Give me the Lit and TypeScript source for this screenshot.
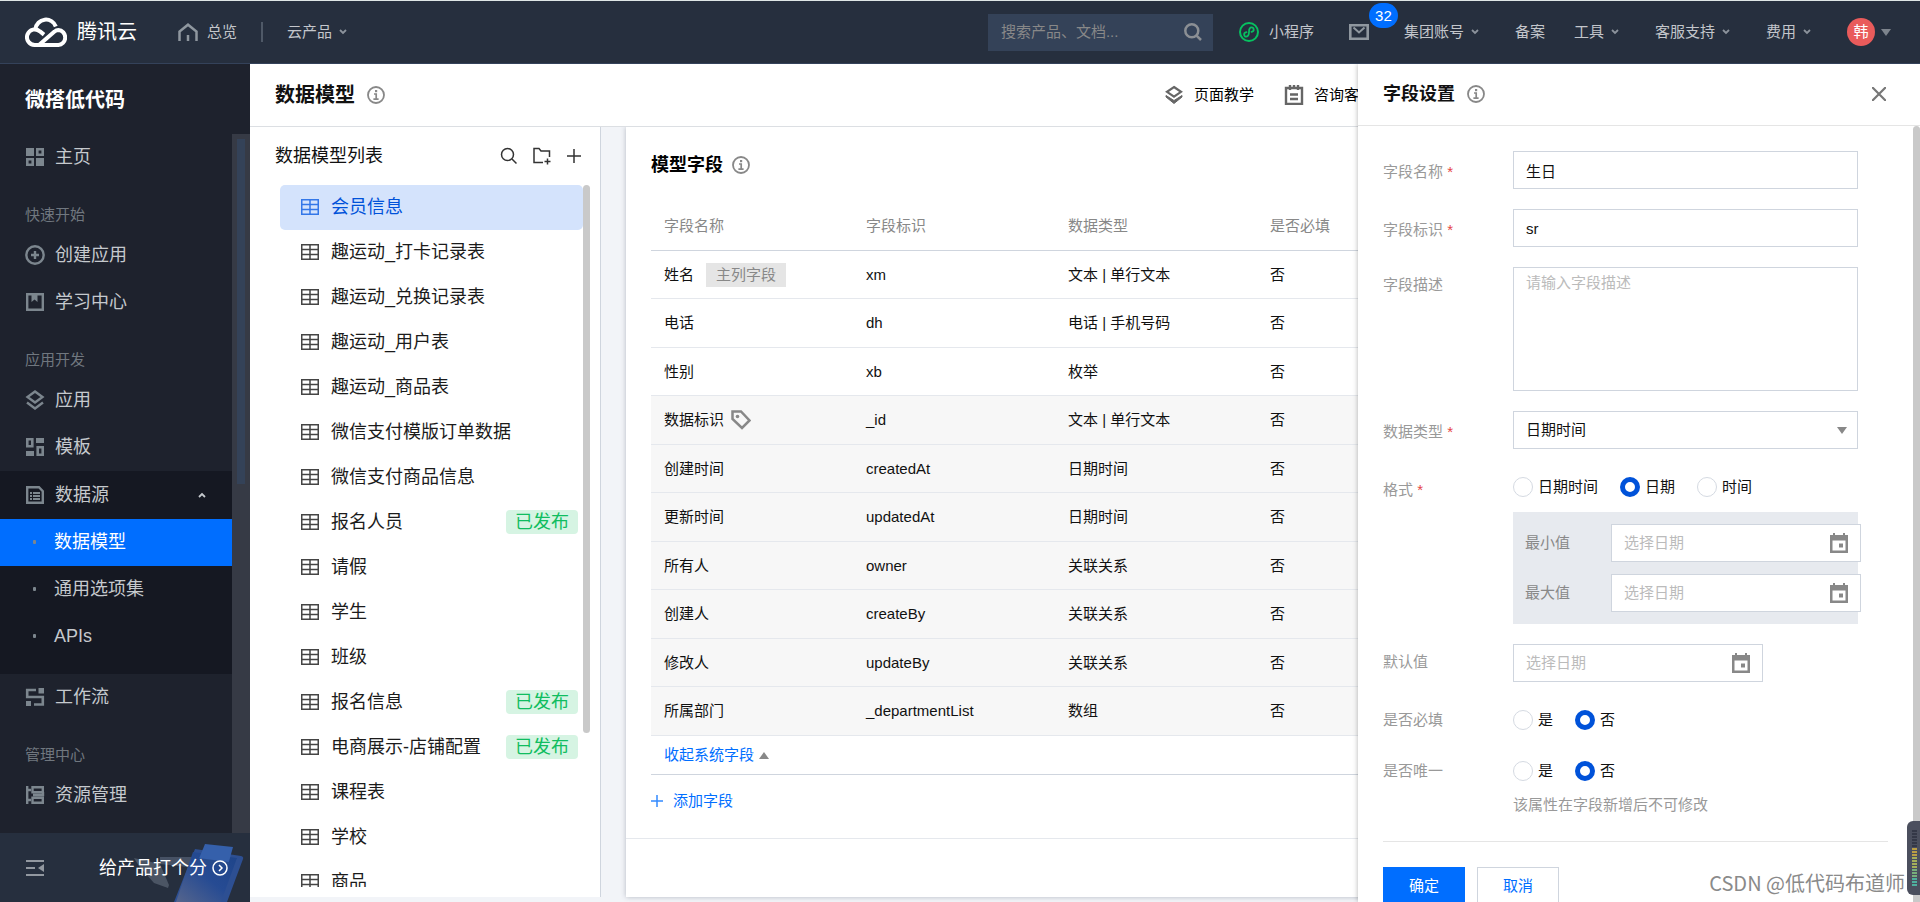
import { LitElement, html, svg, css } from "lit";
import { customElement, state } from "lit/decorators.js";
import { classMap } from "lit/directives/class-map.js";

const base = css`
  * { box-sizing: border-box; }
  :host { font-family: "Liberation Sans", "Noto Sans CJK SC", sans-serif; font-size: 15px; line-height: 24px; color: #111; }
  a { color: inherit; text-decoration: none; }
  button { font: inherit; color: inherit; background: none; border: 0; padding: 0; margin: 0; cursor: pointer; display: flex; align-items: center; }
  input, textarea, select { font: inherit; color: inherit; margin: 0; border-radius: 0; outline: none; }
  h1, h2, p, ul { margin: 0; padding: 0; font-weight: inherit; font-size: inherit; }
  ul { list-style: none; }
  svg { display: block; flex: none; }
`;

const infoIcon = html`<svg width="18" height="18" viewBox="0 0 18 18" fill="none" stroke="#888" stroke-width="2">
  <circle cx="9" cy="9" r="8" stroke-width="1.8"></circle><path d="M7 8h2.2v5M6.4 13.200h5.200" stroke-width="1.700"></path><path d="M8 4h2.200v2.200H8z" fill="#888" stroke="none"></path></svg>`;
const chevron = html`<svg width="10" height="8" viewBox="0 0 10 8" fill="none" stroke="#8c939c" stroke-width="1.8"><path d="M2 2l3 3 3-3"></path></svg>`;
const gridIcon = html`<svg width="18" height="16" viewBox="0 0 18 16" fill="none" stroke="currentColor" stroke-width="1.5"><path d="M.75.75h16.500v14.500H.75zM.75 5.500h16.500M.75 10.500h16.500M9 .75v14.500"></path></svg>`;
const calendarIcon = html`<svg class="cal" width="18" height="20" viewBox="0 0 18 20" fill="#888"><path d="M3 0h2v2h8V0h2v2h3v18H0V2h3zM2.500 7.500v10h13v-10z" fill-rule="evenodd"></path><path d="M9 10.500h4v4H9z"></path></svg>`;

@customElement("top-nav")
class TopNav extends LitElement {
  static styles = [base, css`
    :host { display: block; }
    .bar { display: flex; align-items: center; height: 64px; padding: 0 29px 0 25px; background: #262f3e; border-top: 1px solid #dfe6e6; border-bottom: 1px solid #34425a; color: #c3c6cb; }
    .logo { display: flex; align-items: center; gap: 10px; color: #fff; font-size: 20px; }
    .home { display: flex; align-items: center; gap: 9px; margin-left: 41px; }
    .rule { width: 2px; height: 20px; margin: 0 24px; background: #4f5967; }
    .menu { display: flex; align-items: center; gap: 6px; }
    .search { display: flex; align-items: center; width: 225px; height: 37px; margin-left: auto; padding: 0 11px 0 13px; background: #344258; }
    .search input { flex: 1; min-width: 0; border: 0; padding: 0; background: none; color: #fff; }
    .search input::placeholder { color: #888; opacity: 1; }
    .right { display: flex; align-items: center; gap: 35px; margin-left: 26px; }
    .mini { display: flex; align-items: center; gap: 10px; }
    .pair { display: flex; gap: 29px; }
    .mail { position: relative; }
    .badge { position: absolute; left: 20px; top: -21px; width: 29px; height: 25px; border-radius: 13px; background: #006eff; color: #fff; line-height: 25px; text-align: center; }
    .avatar { display: flex; align-items: center; gap: 6px; }
    .face { width: 28px; height: 28px; border-radius: 50%; background: #e95b5b; color: #fff; line-height: 28px; text-align: center; }
  `];
  menu(t: string) { return html`<button class="menu">${t}${chevron}</button>`; }
  render() {
    return html`<header class="bar">
      <a class="logo" href="#"><svg width="42" height="30" viewBox="0 0 42 30" fill="none" stroke="#fff" stroke-width="4" stroke-linejoin="round">
        <path d="M14 28L29.5 14.6C31 13.2 32.4 13 33.4 13A7 7.500 0 0 1 33 28H10A7.800 7.800 0 1 1 15 14.400L19 17.600"></path><path d="M10.500 12A10.500 10.500 0 0 1 30.800 9.500"></path></svg>腾讯云</a>
      <a class="home" href="#"><svg width="20" height="19" viewBox="0 0 20 19" fill="none" stroke="#8f979f" stroke-width="2.500"><path d="M1.500 18V8.500L10 1.700l8.500 6.800V18"></path><path d="M10 12v6"></path></svg>总览</a>
      <span class="rule"></span>
      ${this.menu("云产品")}
      <label class="search"><input aria-label="搜索" placeholder="搜索产品、文档..." /><svg width="18" height="18" viewBox="0 0 18 18" fill="none" stroke="#8b8f94" stroke-width="2.500"><circle cx="7.800" cy="7.800" r="6.500"></circle><path d="M12.300 12.300L17 17"></path></svg></label>
      <nav class="right">
        <a class="mini" href="#"><svg width="20" height="20" viewBox="0 0 20 20" fill="none" stroke="#07c160" stroke-width="2" stroke-linecap="round"><circle cx="10" cy="10" r="9"></circle><path d="M7.500 10.200C3.800 11 5 15 7.400 14.600S10 12.500 10 10s.4-4.600 2.600-4.600S16 9 12.500 9.800" stroke-width="1.800"></path></svg>小程序</a>
        <a class="mail" href="#" aria-label="消息"><svg width="20" height="16" viewBox="0 0 20 16" fill="none" stroke="#8f979f" stroke-width="2.600"><path d="M1.300 1.300h17.400v13.400H1.300z"></path><path d="M4.500 3.500L10 8.500l5.500-5" stroke-width="2"></path></svg><span class="badge">32</span></a>
        ${this.menu("集团账号")}
        <div class="pair"><a href="#">备案</a>${this.menu("工具")}</div>
        ${this.menu("客服支持")}${this.menu("费用")}
        <button class="avatar"><span class="face">韩</span><svg width="10" height="7" viewBox="0 0 10 7" fill="#7d848d"><path d="M0 0h10L5 7z"></path></svg></button>
      </nav>
    </header>`;
  }
}

const navIcons: Record<string, unknown> = {
  home: svg`<path d="M0 0h8v8H0zM10 10h8v8h-8z" fill="currentColor" stroke="none"></path><path d="M11.300 1.300h5.400v5.400h-5.400zM1.300 11.300h5.400v5.400H1.300z" stroke-width="2.600"></path>`,
  plus: svg`<circle cx="9" cy="9" r="8.700" stroke-width="2.400"></circle><path d="M9 5v8M5 9h8"></path>`,
  book: svg`<path d="M1.200 1.200h15.600v15.600H1.200z"></path><path d="M5.500 2v7l3-2.500 3 2.500V2z" fill="currentColor" stroke="none"></path>`,
  layers: svg`<path d="M9 .5l7.500 5.500L9 11.500 1.500 6zM1 11.500l8 6 8-6"></path>`,
  template: svg`<path d="M1.300 1.300h5v7h-5zM11.700 9.200h5v7.500h-5z" stroke-width="2.600"></path><path d="M10 0h8v5h-8zM0 13h8v5H0z" fill="currentColor" stroke="none"></path>`,
  data: svg`<path d="M1.200 1.200h11.800l3.800 4v11.600H1.200z"></path><path d="M4 7h2m1 0h7M4 10h2m1 0h7M4 13h2m1 0h7" stroke-width="1.800"></path>`,
  flow: svg`<path d="M12.500 0h5.500v5.500h-5.500zM0 13h5v5H0z" fill="currentColor" stroke="none"></path><path d="M10 2H1.200v7h15.600v7.500H8" stroke-width="2.600"></path>`,
  resource: svg`<path d="M1.200 0v18M1 4h4M1 14h4M6.500 1.200h10.300v5H6.500zM6.500 11.800h10.300v5H6.500zM7 9h10V6"></path>`,
  line: svg`<path d="M-1 1h20M1 1v16h16V1" stroke-width="2"></path>`,
};

@customElement("side-nav")
class SideNav extends LitElement {
  static styles = [base, css`
    :host { display: flex; flex-direction: column; width: 250px; flex: none; background: #1e222d; color: #c5c9cd; font-size: 18px; }
    .title { padding: 24px 25px 22px; color: #fff; font-size: 20px; font-weight: bold; }
    .scroll { flex: 1; min-height: 0; display: flex; overflow: hidden; }
    .items { flex: 1; }
    .track { width: 18px; padding: 5px; background: #363a45; }
    .thumb { height: 50%; width: 8px; background: #344258; }
    .item { display: flex; align-items: center; gap: 11px; height: 47px; padding: 0 25px 1px 26px; }
    .item svg { color: #7c868e; }
    .label { padding: 22px 25px 5px; font-size: 15px; color: #70777f; }
    .open { background: #151822; padding-bottom: 14px; }
    .open .item:first-child { height: 48px; width: 100%; }
    .open .caret { margin-left: auto; color: #c5c9cd; }
    .child::before { content: ""; width: 3px; height: 4px; margin: 0 7px; border-radius: 1px; background: #7c868e; }
    .active { background: #006eff; color: #fff; }
    .foot { display: flex; align-items: center; height: 69px; padding: 0 22px 0 26px; background: #262f3e; color: #fff; position: relative; }
    .rate { margin-left: auto; gap: 5px; position: relative; }
    .art { position: absolute; right: 4px; bottom: 0; }
  `];
  item(icon: string, text: string) {
    return html`<a class="item" href="#"><svg width="18" height="18" viewBox="0 0 18 18" overflow="visible" fill="none" stroke="currentColor" stroke-width="2.400">${navIcons[icon]}</svg>${text}</a>`;
  }
  render() {
    return html`<div class="title">微搭低代码</div>
      <div class="scroll"><nav class="items">
        ${this.item("home", "主页")}
        <p class="label">快速开始</p>${this.item("plus", "创建应用")}${this.item("book", "学习中心")}
        <p class="label">应用开发</p>${this.item("layers", "应用")}${this.item("template", "模板")}
        <div class="open">
          <button class="item" aria-expanded="true"><svg width="18" height="18" viewBox="0 0 18 18" fill="none" stroke="currentColor" stroke-width="2.400">${navIcons.data}</svg>数据源<svg class="caret" width="10" height="8" viewBox="0 0 10 8" fill="none" stroke="currentColor" stroke-width="1.800"><path d="M2 6l3-3 3 3"></path></svg></button>
          ${["数据模型", "通用选项集", "APIs"].map((t, i) => html`<a href="#" class=${classMap({ item: true, child: true, active: i === 0 })}>${t}</a>`)}
        </div>
        ${this.item("flow", "工作流")}
        <p class="label">管理中心</p>${this.item("resource", "资源管理")}${this.item("line", "")}
      </nav><div class="track"><div class="thumb"></div></div></div>
      <div class="foot">
        <svg class="art" width="116" height="58" viewBox="0 0 116 58">
          <defs><linearGradient id="g" x1="0" y1="1" x2="1" y2="0"><stop offset="0" stop-color="#56658c"></stop><stop offset=".5" stop-color="#264b93"></stop><stop offset="1" stop-color="#1e4489"></stop></linearGradient></defs>
          <path d="M30 13h34l-6 10-28-3z" fill="#465164"></path><path d="M4 14l26 6 9 21-1 3-14-5L9 22z" fill="#4b5564"></path>
          <path d="M65 5l46 7q3 1 2 3L97 58H44z" fill="#2d4f92"></path><path d="M63 8l44 6-16 44H46z" fill="url(#g)"></path>
          <path d="M75 0l28 3-5 18-30-4z" fill="#3560ab"></path><path d="M68 14l31 4-2 5-30-4z" fill="#274b8c"></path>
        </svg>
        <svg width="18" height="18" viewBox="0 0 18 18" fill="none" stroke="#9298a0" stroke-width="2.200"><path d="M0 2h18M0 9h9M0 16h18"></path><path d="M18 5v8l-6-4z" fill="#9298a0" stroke="none"></path></svg>
        <button class="rate">给产品打个分<svg width="16" height="16" viewBox="0 0 16 16" fill="none" stroke="#fff" stroke-width="1.500"><circle cx="8" cy="8" r="7"></circle><path d="M7 5l3 3-3 3"></path></svg></button>
      </div>`;
  }
}

@customElement("model-list")
class ModelList extends LitElement {
  @state() selected = 0;
  models = ["会员信息", "趣运动_打卡记录表", "趣运动_兑换记录表", "趣运动_用户表", "趣运动_商品表", "微信支付模版订单数据", "微信支付商品信息", "报名人员", "请假", "学生", "班级", "报名信息", "电商展示-店铺配置", "课程表", "学校", "商品"];
  published = [7, 11, 12];
  static styles = [base, css`
    :host { display: flex; flex-direction: column; width: 351px; flex: none; padding-bottom: 10px; background: #fff; border-right: 1px solid #cfd5de; font-size: 18px; }
    .head { display: flex; align-items: center; height: 58px; padding: 0 18px 0 25px; }
    .tools { display: flex; gap: 15px; margin-left: auto; }
    .body { flex: 1; min-height: 0; display: flex; padding: 0 10px 0 30px; overflow: hidden; }
    .rows { flex: 1; }
    .row { display: flex; gap: 12px; width: 100%; height: 45px; padding: 0 5px 1px 21px; border-radius: 5px; color: #1b1b1b; }
    .row svg { color: #444; }
    .on { background: #d4e3fc; color: #0052d9; }
    .on svg { color: #3377e8; }
    .tag { margin-left: auto; padding: 0 9px; border-radius: 4px; background: #d6f4e3; color: #10bd60; }
    .thumb { width: 7px; height: 78%; border-radius: 4px; background: #c9c9c9; }
  `];
  render() {
    return html`<div class="head"><h2>数据模型列表</h2><div class="tools">
        <button aria-label="搜索"><svg width="18" height="18" viewBox="0 0 18 18" fill="none" stroke="#333" stroke-width="1.500"><circle cx="7.500" cy="7.500" r="6"></circle><path d="M12 12l4.500 4.500"></path></svg></button>
        <button aria-label="新建文件夹"><svg width="18" height="18" viewBox="0 0 18 18" fill="none" stroke="#333" stroke-width="1.500"><path d="M10 15.500H1V1.500h5l2 2.500h8.500v6M11.500 14.500h6M14.500 11.500v6"></path></svg></button>
        <button aria-label="新建"><svg width="16" height="18" viewBox="0 0 16 18" fill="none" stroke="#333" stroke-width="1.500"><path d="M1 9h14M8 2v14"></path></svg></button>
      </div></div>
      <div class="body"><ul class="rows">${this.models.map((m, i) => html`<li><button class=${classMap({ row: true, on: i === this.selected })} @click=${() => (this.selected = i)}>${gridIcon}<span>${m}</span>${this.published.includes(i) ? html`<span class="tag">已发布</span>` : ""}</button></li>`)}</ul><div class="thumb"></div></div>`;
  }
}

@customElement("field-table")
class FieldTable extends LitElement {
  rows = [["姓名", "xm", "文本 | 单行文本"], ["电话", "dh", "电话 | 手机号码"], ["性别", "xb", "枚举"], ["数据标识", "_id", "文本 | 单行文本"], ["创建时间", "createdAt", "日期时间"], ["更新时间", "updatedAt", "日期时间"], ["所有人", "owner", "关联关系"], ["创建人", "createBy", "关联关系"], ["修改人", "updateBy", "关联关系"], ["所属部门", "_departmentList", "数组"]];
  static styles = [base, css`
    :host { display: block; flex: 1; min-width: 0; margin: 0 0 5px 25px; background: #fff; box-shadow: 0 0 5px rgba(40, 50, 70, 0.3); }
    .card { padding: 24px 25px; border-bottom: 1px solid #e5e8ed; }
    .title { display: flex; align-items: center; gap: 9px; height: 28px; font-size: 18px; font-weight: bold; color: #000; }
    table { width: 100%; margin-top: 22px; table-layout: fixed; border-collapse: separate; border-spacing: 0; }
    .col { width: 202px; }
    th, td { padding: 0 12px 0 13px; text-align: left; vertical-align: middle; border-bottom: 1px solid #e5e8ed; font-weight: normal; }
    th { height: 50px; color: #888; border-color: #cfd5de; }
    td { height: 48px; }
    tbody tr:nth-child(even) td { height: 49px; }
    .system td { background: #f7f7f7; }
    .name { display: flex; align-items: center; }
    .tag { margin-left: 12px; padding: 0 10px; background: #e5e5e5; color: #888; }
    .name svg { margin-left: 7px; }
    .fold { gap: 5px; height: 39px; width: 100%; padding: 0 12px 0 13px; color: #006eff; border-bottom: 1px solid #cfd5de; }
    .add { gap: 10px; margin-top: 14px; padding-bottom: 1px; color: #006eff; }
  `];
  render() {
    return html`<section class="card"><h2 class="title">模型字段 ${infoIcon}</h2>
      <table><colgroup><col class="col" /><col class="col" /><col class="col" /><col /></colgroup>
        <thead><tr><th>字段名称</th><th>字段标识</th><th>数据类型</th><th>是否必填</th></tr></thead>
        <tbody>${this.rows.map((r, i) => html`<tr class=${classMap({ system: i > 2 })}><td><div class="name">${r[0]}${i === 0 ? html`<span class="tag">主列字段</span>` : ""}${i === 3 ? html`<svg width="20" height="20" viewBox="0 0 20 20" fill="none" stroke="#888" stroke-width="2.500"><path d="M1.500 1.500h8.500l8.500 9-7.500 7.500-9.500-9z"></path><circle cx="6.500" cy="6.500" r="1.800" fill="#888" stroke="none"></circle></svg>` : ""}</div></td><td>${r[1]}</td><td>${r[2]}</td><td>否</td></tr>`)}</tbody></table>
      <button class="fold">收起系统字段<svg width="10" height="7" viewBox="0 0 10 7" fill="#888"><path d="M0 7h10L5 0z"></path></svg></button>
      <button class="add"><svg width="12" height="12" viewBox="0 0 12 12" stroke="#338bff" stroke-width="1.500"><path d="M0 6h12M6 0v12"></path></svg>添加字段</button>
    </section>`;
  }
}

@customElement("field-drawer")
class FieldDrawer extends LitElement {
  static styles = [base, css`
    :host { display: flex; flex-direction: column; background: #fff; box-shadow: 0 0 5px rgba(0, 0, 0, 0.3); }
    .head { display: flex; align-items: center; gap: 12px; height: 62px; flex: none; padding: 0 34px 2px 25px; border-bottom: 1px solid #e5e5e5; font-size: 18px; }
    .head h2 { font-weight: bold; }
    .close { margin-left: auto; }
    .wrap { flex: 1; min-height: 0; display: flex; overflow: hidden; }
    .body { flex: 1; padding: 25px 25px 0; }
    .thumb { width: 7px; height: 100%; border-radius: 4px 4px 0 0; background: #c9c9c9; }
    .form { display: grid; grid-template-columns: 130px minmax(0, 345px); row-gap: 20px; color: #111; }
    .label { padding-top: 6px; color: #999; }
    .req { padding-top: 9px; }
    .req::after { content: " *"; color: #e54545; }
    .box { display: block; width: 100%; height: 38px; padding: 0 12px; background: #fff; border: 1px solid #cfd5de; }
    textarea.box { height: 124px; padding-top: 3px; resize: none; }
    ::placeholder { color: #bbb; opacity: 1; }
    .pick { position: relative; }
    .pick select { appearance: none; }
    .arrow { position: absolute; right: 11px; top: 16px; pointer-events: none; }
    .date { display: flex; align-items: center; width: 250px; }
    .date input { flex: 1; min-width: 0; padding: 0; border: 0; background: none; }
    .radios { display: flex; gap: 22px; height: 31px; padding-top: 5px; }
    .radio { display: flex; align-items: center; gap: 5px; }
    .radio input { appearance: none; width: 20px; height: 20px; border: 1px solid #d5dae2; border-radius: 50%; background: #fff; }
    .radio input:checked { border: 5px solid #0052d9; }
    .range { display: grid; grid-template-columns: 86px 250px; gap: 12px 0; align-items: center; margin-top: 12px; padding: 12px; background: #e7eaef; color: #888; }
    .hint { margin-top: 9px; color: #999; }
    .actions { display: flex; gap: 12px; margin-top: 24px; padding-top: 25px; border-top: 1px solid #e5e5e5; }
    .btn { width: 82px; height: 38px; justify-content: center; border: 1px solid #cfd5de; color: #006eff; }
    .primary { background: #006eff; border-color: #006eff; color: #fff; }
  `];
  date(id: string) { return html`<div class="box date"><input id=${id} placeholder="选择日期" />${calendarIcon}</div>`; }
  radios(name: string, list: string[]) {
    return html`<div class="radios" role="radiogroup" aria-labelledby=${name}>${list.map((t, i) => html`<label class="radio"><input type="radio" name=${name} .checked=${i === 1} />${t}</label>`)}</div>`;
  }
  render() {
    return html`<div class="head"><h2>字段设置</h2>${infoIcon}<button class="close" aria-label="关闭"><svg width="14" height="14" viewBox="0 0 14 14" stroke="#777" stroke-width="2.200"><path d="M0 0l14 14M14 0L0 14"></path></svg></button></div>
      <div class="wrap"><form class="body"><div class="form">
        <label class="label req" for="name">字段名称</label><input class="box" id="name" .value=${"生日"} />
        <label class="label req" for="key">字段标识</label><input class="box" id="key" .value=${"sr"} />
        <label class="label" for="desc">字段描述</label><textarea class="box" id="desc" placeholder="请输入字段描述"></textarea>
        <label class="label req" for="type">数据类型</label><div class="pick"><select class="box" id="type"><option>日期时间</option></select><svg class="arrow" width="10" height="7" viewBox="0 0 10 7" fill="#888"><path d="M0 0h10L5 7z"></path></svg></div>
        <span class="label req" id="format">格式</span><div>${this.radios("format", ["日期时间", "日期", "时间"])}
          <div class="range"><label for="min">最小值</label>${this.date("min")}<label for="max">最大值</label>${this.date("max")}</div></div>
        <label class="label" for="default">默认值</label>${this.date("default")}
        <span class="label" id="required">是否必填</span>${this.radios("required", ["是", "否"])}
        <span class="label" id="unique">是否唯一</span><div>${this.radios("unique", ["是", "否"])}<p class="hint">该属性在字段新增后不可修改</p></div>
      </div>
      <div class="actions"><button type="button" class="btn primary">确定</button><button type="button" class="btn">取消</button></div></form><div class="thumb"></div></div>`;
  }
}

@customElement("app-root")
class AppRoot extends LitElement {
  static styles = [base, css`
    :host { display: flex; flex-direction: column; height: 100vh; overflow: hidden; background: #f2f4f8; position: relative; }
    .shell { flex: 1; min-height: 0; display: flex; position: relative; overflow: hidden; }
    .main { flex: 1; min-width: 0; display: flex; flex-direction: column; }
    .head { display: flex; align-items: center; gap: 12px; height: 63px; padding: 0 546px 0 25px; background: #fff; border-bottom: 1px solid #dcdfe3; position: relative; }
    .head h1 { font-size: 20px; font-weight: bold; }
    .links { display: flex; gap: 30px; margin-left: auto; color: #000; }
    .links a { display: flex; align-items: center; gap: 10px; }
    .cols { flex: 1; min-height: 0; display: flex; overflow: hidden; }
    model-list { margin-bottom: 5px; }
    .drawer { position: absolute; top: 0; right: 0; bottom: 0; width: 562px; }
    .mark { position: absolute; right: 15px; bottom: 5px; font-family: "Noto Sans CJK SC", sans-serif; font-size: 20px; line-height: 28px; color: #8a8a8a; }
    .meter { position: absolute; right: 0; bottom: 7px; width: 13px; height: 74px; padding: 9px 3px 9px 5px; border-radius: 6px 0 0 6px; background: #4b4f5e; }
    .meter svg { width: 100%; height: 100%; }
  `];
  render() {
    const bars = Array.from({ length: 19 }, (_, i) => svg`<path d=${`M0 ${i * 3 + 1}h5`} stroke=${i < 6 ? "#2d3140" : i < 9 ? "#e0b93c" : i < 13 ? "#c3cf5a" : i < 16 ? "#86cf86" : "#4fd0b5"} stroke-width="1.500"></path>`);
    return html`<top-nav></top-nav>
      <div class="shell"><side-nav></side-nav>
        <main class="main">
          <div class="head"><h1>数据模型</h1>${infoIcon}
            <nav class="links">
              <a href="#"><svg width="20" height="20" viewBox="0 0 20 20" fill="none" stroke="#666" stroke-width="2.200"><path d="M10 2l7 4.800-7 4.800-7-4.800z"></path><path d="M2 12l8 6.500 8-6.500v-1.500l-8 5-8-5z" fill="#666" stroke-width="1"></path></svg>页面教学</a>
              <a href="#"><svg width="20" height="20" viewBox="0 0 20 20" fill="none" stroke="#666" stroke-width="2.400"><path d="M2 3h16v16H2zM6 0v5M14 0v5M10 0v4M6 9.500h8M6 14h8"></path></svg>咨询客服</a>
            </nav></div>
          <div class="cols"><model-list></model-list><field-table></field-table></div>
        </main>
        <field-drawer class="drawer"></field-drawer>
      </div>
      <div class="mark">CSDN @低代码布道师</div>
      <div class="meter"><svg viewBox="0 0 5 56" preserveAspectRatio="none">${bars}</svg></div>`;
  }
}
